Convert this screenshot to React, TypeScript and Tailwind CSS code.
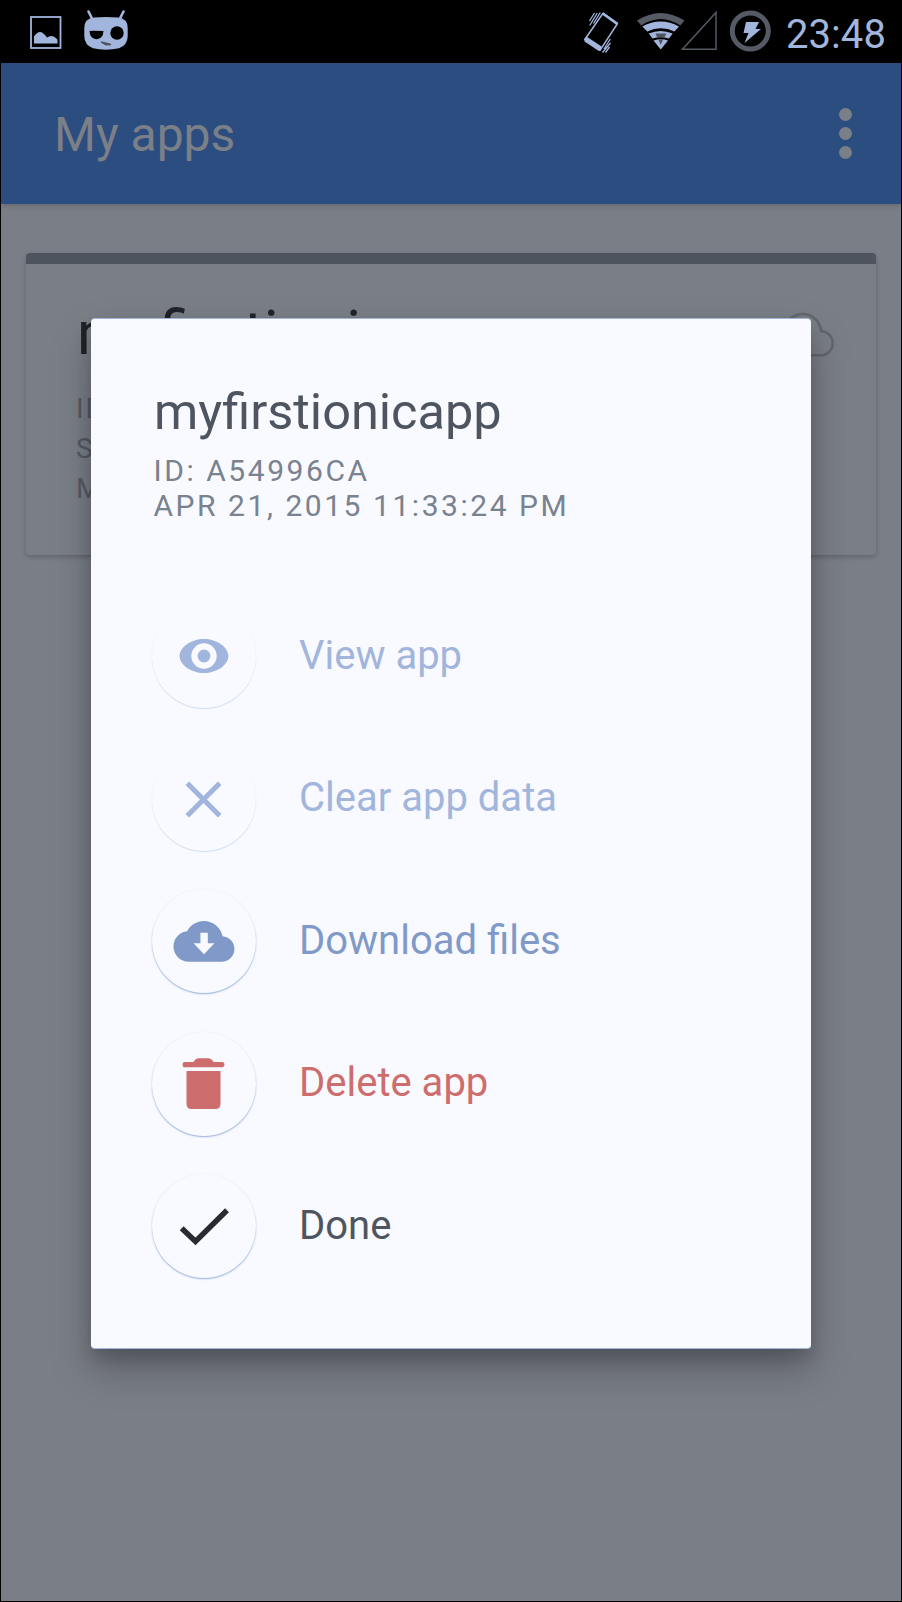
import type { ReactNode } from "react";

type Action = {
  label: ReactNode;
  color: string;
  circle: string;
  icon: ReactNode;
};

const strongCircle = "shadow-[0_1px_1px_rgba(140,165,215,0.6),0_1px_2px_rgba(140,165,215,0.5)]";
const faintCircle = "shadow-[0_1px_1px_rgba(150,175,220,0.4)]";

const actions: Action[] = [
  {
    label: "View app",
    color: "text-[#a2b5dc]",
    circle: faintCircle,
    icon: (
      <>
        <path
          fillRule="evenodd"
          fill="currentColor"
          d="M27.500 52C28 43 39 35 52 35s24 8 24.500 17C76 61 65 69 52 69S28 61 27.500 52zM52 39.300a12.700 12.700 0 1 0 0 25.400a12.700 12.700 0 1 0 0-25.400z"
        />
        <circle cx="52" cy="52" r="6.400" fill="currentColor" />
      </>
    ),
  },
  {
    label: "Clear app data",
    color: "text-[#a2b5dc]",
    circle: faintCircle,
    icon: <path d="M35.300 36.300L67.700 68.700M67.700 36.300L35.300 68.700" stroke="currentColor" strokeWidth="5" fill="none" />,
  },
  {
    label: "Download files",
    color: "text-[#8099c8]",
    circle: strongCircle,
    icon: (
      <g transform="translate(21.500 21.840) scale(2.540)">
        <path
          fillRule="evenodd"
          fill="currentColor"
          d="M19.350 10.040C18.670 6.590 15.640 4 12 4 9.110 4 6.600 5.640 5.350 8.040 2.340 8.360 0 10.910 0 14c0 3.310 2.690 6 6 6h13c2.760 0 5-2.240 5-5 0-2.640-2.050-4.780-4.650-4.960zM16.100 12.800L12 17.100L7.900 12.800H10.600V8.600H13.500V12.800z"
        />
      </g>
    ),
  },
  {
    label: "Delete app",
    color: "text-[#cd6d6e]",
    circle: strongCircle,
    icon: (
      <path
        fill="currentColor"
        d="M34.500 39H68.500V72Q68.500 77 63.500 77H39.500Q34.500 77 34.500 72zM32.500 30H41.500Q43.500 26.300 47 26.300H56Q59.500 26.300 61.500 30H70.500Q72.500 30 72.500 32.600T70.500 35.300H32.500Q30.500 35.300 30.500 32.600T32.500 30z"
      />
    ),
  },
  {
    label: "Done",
    color: "text-[#4f5560]",
    circle: strongCircle,
    icon: <path d="M29.700 54.200L43.500 67.500L75 36.300" stroke="#282b30" strokeWidth="5.500" fill="none" />,
  },
];

function StatusBar() {
  return (
    <div className="flex h-[63px] shrink-0 items-start justify-between bg-black pl-[29px] pr-[15px] text-[#a2b5dc]">
      <div className="flex gap-[20px]">
        <svg width="33" height="63" viewBox="30 0 33 63" fill="none">
          <rect x="31" y="17" width="29.500" height="31" stroke="currentColor" strokeWidth="1.800" />
          <path d="M34 43.500V36.500Q37 32 40 32Q43 32 47 37.500Q49 35.800 52 36Q55 36.500 57.500 39.500V43.500z" fill="currentColor" />
        </svg>
        <svg width="46" height="63" viewBox="83 0 46 63" fill="none">
          <path d="M88.500 11.500L92 18.500M123.500 11.500L120 18.500" stroke="currentColor" strokeWidth="2.600" strokeLinecap="round" />
          <path
            fill="currentColor"
            d="M94 17.500Q106 16.500 118 17.500Q127.700 18.500 127.700 28V36Q127.700 45 119 48.300Q106 51 93 48.300Q84.300 45 84.300 36V28Q84.300 18.500 94 17.500z"
          />
          <path d="M89.500 31Q90 30.500 103.500 31Q103.500 35 101 37.500Q96.500 41 92 37.500Q89.500 35 89.500 31z" fill="#000" />
          <circle cx="117" cy="33" r="6.700" fill="#000" />
          <path d="M101 42L111 44.500L106 44.800z" stroke="#4e545d" strokeWidth="1.300" fill="#4e545d" />
        </svg>
      </div>
      <div className="flex">
        <svg width="50" height="63" viewBox="580 0 50 63" fill="none">
          <path d="M603 13.200L617.500 23.500L600 50.300L584.800 39.500z" stroke="currentColor" strokeWidth="1.500" strokeLinejoin="round" />
          <path
            d="M602 14.500L603.500 12.500L618 22.800L616.500 25zM586.300 36.500L601.700 46.500L600.500 50.500L598.500 50.700L584.500 41.500L584.300 39z"
            fill="currentColor"
          />
          <path
            d="M594.500 13L589.500 21M597.300 13L589.700 25.500M600.300 12.500L593.500 23.500M610.300 39L604 49M610.500 43L602.500 52.500M609.500 47L605.500 52.500"
            stroke="currentColor"
            strokeWidth="1.300"
          />
        </svg>
        <svg width="92" height="63" viewBox="630 0 92 63" fill="none">
          <path d="M637 20.500Q660.700 5.500 684.500 20.500L680.300 25.500Q660.700 12.500 641.300 25.500z" fill="#555a64" />
          <path d="M642.300 26.500Q660.700 16.500 679 26.500L674.500 31.500Q660.700 25 647.300 31.500z" fill="currentColor" />
          <path d="M648.700 33.500Q660.700 28.500 672.700 33.500L669 38.500Q660.700 36 652.500 38.500z" fill="currentColor" />
          <path d="M653.500 40.500Q660.700 38 668 40.500L660.700 49.500z" fill="currentColor" />
          <path d="M655.500 33.500H666.500L664.500 37H657zM658.500 39.500H663L660.700 45z" fill="#4e545d" />
          <path d="M716 12.500V49.200H682.500z" stroke="#555a64" strokeWidth="1.500" />
        </svg>
        <svg width="64" height="63" viewBox="722 0 64 63" fill="none">
          <circle cx="750.300" cy="31" r="18" stroke="#555a64" strokeWidth="5" />
          <path d="M746 22H759L755.500 29H761L744.500 43L748.500 33H743.500z" fill="currentColor" />
        </svg>
        <span className="pt-px text-[40px] leading-[68px] tracking-[0.1px]">23:48</span>
      </div>
    </div>
  );
}

function Toolbar() {
  return (
    <header className="flex h-[141px] shrink-0 items-center justify-between bg-[#2c4d80] pl-[53px] pr-[49.5px] text-[#7b7f87] shadow-[0_1px_6px_rgba(0,0,0,0.22)]">
      <h1 className="pt-[3px] text-[48px] leading-[56px]">My apps</h1>
      <div className="flex flex-col gap-[6px]">
        <span className="size-[13px] rounded-full bg-[#7b7f87]" />
        <span className="size-[13px] rounded-full bg-[#7b7f87]" />
        <span className="size-[13px] rounded-full bg-[#7b7f87]" />
      </div>
    </header>
  );
}

function AppCard() {
  return (
    <section className="mx-[25px] mt-[49px] flex h-[302px] justify-between rounded-[4px] border-t-[11px] border-[#4e545d] pl-[51px] pr-[40px] shadow-[0_2px_5px_rgba(0,0,0,0.22)]">
      <div className="pt-[35px]">
        <h2 className="text-[60.5px] leading-[70px] text-[#202328]">myfirstionicapp</h2>
        <div className="mt-[20px] text-[28px] leading-[40px] tracking-[2px] text-[#555a63]">
          <p className="-ml-px">ID</p>
          <p className="-ml-px">S</p>
          <p className="-ml-px">M</p>
        </div>
      </div>
      <svg className="mt-[43px]" width="60" height="54" viewBox="775 308 60 54" fill="none">
        <path
          d="M792 356.300H821A12.200 12.200 0 0 0 820 332A18.300 18.300 0 0 0 785 326A15 15 0 0 0 792 356.300z"
          stroke="#62676f"
          strokeWidth="2.600"
        />
      </svg>
    </section>
  );
}

function AppDialog() {
  return (
    <div
      role="dialog"
      className="absolute left-[90px] top-[318px] h-[1031px] w-[720px] rounded-[4px] border-y border-[#a2b5dc] bg-[#f8faff] pl-[61px] pt-[63px] shadow-[0_20px_40px_rgba(0,4,12,0.26),0_10px_16px_rgba(0,4,12,0.14)]"
    >
      <h2 className="ml-[2px] text-[50.5px] leading-[60px] text-[#4f5560]">myfirstionicapp</h2>
      <div className="ml-[1.5px] mt-[11px] text-[30px] leading-[35px] tracking-[2.55px] text-[#7a8290]">
        <p>ID: A54996CA</p>
        <p>APR 21, 2015 11:33:24 PM</p>
      </div>
      <ul className="mt-[81px] flex flex-col gap-[38.5px]">
        {actions.map((action, index) => (
          <li key={index} className={`flex h-[104px] items-center gap-[43px] ${action.color}`}>
            <span className={`size-[104px] rounded-full bg-[#f8faff] ${action.circle}`}>
              <svg width="104" height="104" viewBox="0 0 104 104" fill="none">
                {action.icon}
              </svg>
            </span>
            <span className="pb-[1px] text-[40px] leading-[48px]">{action.label}</span>
          </li>
        ))}
      </ul>
    </div>
  );
}

export default function App() {
  return (
    <div className="relative flex h-[1602px] w-[902px] flex-col overflow-hidden border-x border-b border-black bg-[#7a7e86] font-[Roboto,sans-serif]">
      <StatusBar />
      <Toolbar />
      <AppCard />
      <AppDialog />
    </div>
  );
}
